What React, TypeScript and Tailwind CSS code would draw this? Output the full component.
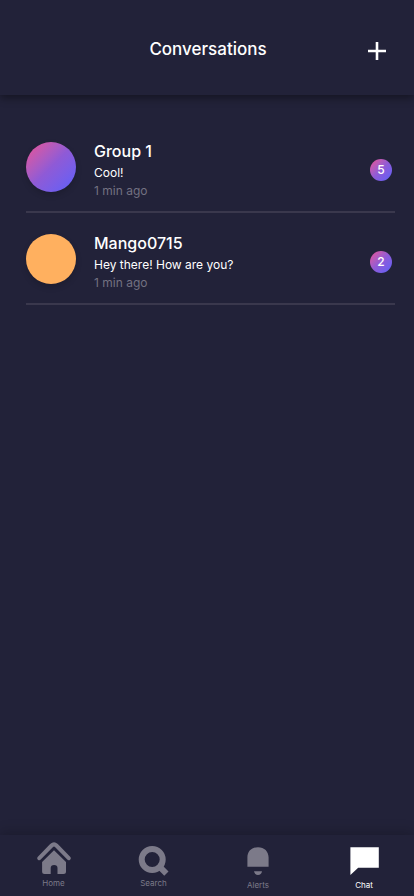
import type { ReactNode } from "react";

type Conversation = {
  name: string;
  message: string;
  time: string;
  unread: number;
  avatar: string;
};

const conversations: Conversation[] = [
  {
    name: "Group 1",
    message: "Cool!",
    time: "1 min ago",
    unread: 5,
    avatar: "bg-linear-to-br from-[#ed4c92] via-[#8f5ad6] to-[#5a5ffc]",
  },
  {
    name: "Mango0715",
    message: "Hey there! How are you?",
    time: "1 min ago",
    unread: 2,
    avatar: "bg-[#ffb05f]",
  },
];

function ConversationRow({ item }: { item: Conversation }) {
  return (
    <li className="border-b-2 border-[#3a384d]">
      <a href="#conversation" className="flex items-center pt-[18px] pr-[3px] pb-2.5">
        <span className={`mb-1.5 size-[50px] shrink-0 rounded-full shadow-[0_3px_6px_rgba(0,0,0,0.16)] ${item.avatar}`} />
        <span className="ml-[18px] flex min-w-0 flex-1 flex-col pb-0.5">
          <span className="text-base leading-6 font-medium text-white">{item.name}</span>
          <span className="text-xs leading-5 text-white">{item.message}</span>
          <span className="text-xs leading-4 text-[#737181]">{item.time}</span>
        </span>
        <span className="flex size-[22px] shrink-0 items-center justify-center rounded-full bg-linear-to-br from-[#ed4c92] via-[#8f5ad6] to-[#5a5ffc] text-xs font-medium text-white">
          {item.unread}
        </span>
      </a>
    </li>
  );
}

function Tab({ label, active, drop, children }: { label: string; active?: boolean; drop?: boolean; children: ReactNode }) {
  return (
    <a
      href={`#${label.toLowerCase()}`}
      aria-current={active ? "page" : undefined}
      className={`flex flex-col items-center ${drop ? "pt-2" : "pt-1.5"} ${active ? "text-white" : "text-[#7c7a89]"}`}
    >
      {children}
      <span className="text-[8px] leading-3">{label}</span>
    </a>
  );
}

export default function App() {
  return (
    <div className="flex min-h-screen flex-col bg-[#222239] font-['Inter','Liberation_Sans',sans-serif]">
      <header className="grid h-[95px] grid-cols-[1fr_auto_1fr] items-center pt-0.5 pr-7 pl-[30px] shadow-[0_3px_8px_rgba(0,0,0,0.4)]">
        <h1 className="col-start-2 text-[17px] leading-6 font-medium text-white">Conversations</h1>
        <button type="button" aria-label="New conversation" className="justify-self-end pt-[5px] text-white">
          <svg width="18" height="18" viewBox="0 0 18 18" className="block" stroke="currentColor" strokeWidth="2.6">
            <path d="M9 0v18M0 9h18" />
          </svg>
        </button>
      </header>

      <main className="flex-1 pt-[26px] pr-[19px] pl-[26px]">
        <ul>
          {conversations.map((item) => (
            <ConversationRow key={item.name} item={item} />
          ))}
        </ul>
      </main>

      <nav className="grid h-[61px] grid-cols-[107fr_93fr_116fr_96fr] pr-0.5 shadow-[0_-3px_12px_rgba(0,0,0,0.2)]">
        <Tab label="Home">
          <svg width="34" height="36" viewBox="0 0 34 36" fill="none">
            <path d="M2.3 17.2 14.6 4.5q2.4-2.4 4.8 0L31.7 17.2" stroke="currentColor" strokeWidth="4" strokeLinecap="round" strokeLinejoin="round" />
            <path d="M17 9.3 29 21v9.5q0 2.5-2.5 2.5h-6v-6q0-3-3.4-3t-3.4 3v6H7.6q-2.5 0-2.5-2.5V21Z" fill="currentColor" />
          </svg>
        </Tab>
        <Tab label="Search">
          <svg width="32" height="36" viewBox="0 0 32 36" fill="none" stroke="currentColor" strokeWidth="6">
            <circle cx="14.2" cy="18.5" r="10.5" />
            <path d="m21 25.2 7.4 7.4" />
          </svg>
        </Tab>
        <Tab label="Alerts" drop>
          <svg width="22" height="36" viewBox="0 0 22 36" fill="currentColor">
            <path d="M0.4 23.7V14.6C0.4 8.4 4.6 4.2 11 4.2s10.6 4.2 10.6 10.4v9.1ZM7 28.2h8q-.7 3.8-4 3.8t-4-3.8Z" />
          </svg>
        </Tab>
        <Tab label="Chat" active drop>
          <svg width="29" height="36" viewBox="0 0 29 36" fill="currentColor">
            <path d="M0.4 4.2h28.4v20.6H8.2L0.4 32Z" />
          </svg>
        </Tab>
      </nav>
    </div>
  );
}
